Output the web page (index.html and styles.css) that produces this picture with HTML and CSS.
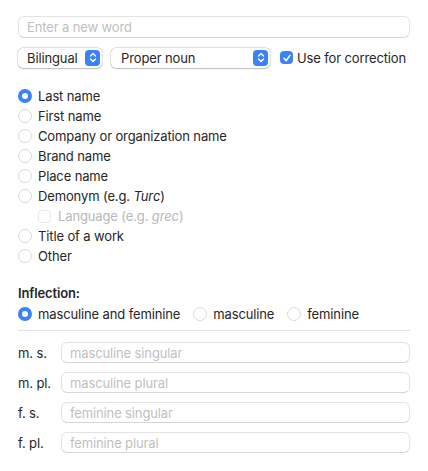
FILE: index.html
```html
<!DOCTYPE html>
<html>
<head>
<meta charset="utf-8">
<link rel="stylesheet" href="styles.css">
</head>
<body>
<div class="panel">
  <div class="field word"><span class="ph">Enter a new word</span></div>

  <div class="toolbar">
    <div class="popup pop-lang"><span>Bilingual</span>
      <span class="arrows"><svg width="8" height="11" viewBox="0 0 8 11"><path d="M1.5 4 L4 1.5 L6.5 4 M1.5 7 L4 9.5 L6.5 7" fill="none" stroke="#fff" stroke-width="1.4" stroke-linecap="round" stroke-linejoin="round"/></svg></span>
    </div>
    <div class="popup pop-type"><span>Proper noun</span>
      <span class="arrows"><svg width="8" height="11" viewBox="0 0 8 11"><path d="M1.5 4 L4 1.5 L6.5 4 M1.5 7 L4 9.5 L6.5 7" fill="none" stroke="#fff" stroke-width="1.4" stroke-linecap="round" stroke-linejoin="round"/></svg></span>
    </div>
    <label class="check">
      <span class="box on"><svg width="10" height="10" viewBox="0 0 10 10"><path d="M2 5.3 L4.2 7.6 L8 2.4" fill="none" stroke="#fff" stroke-width="1.6" stroke-linecap="round" stroke-linejoin="round"/></svg></span>
      <span>Use for correction</span>
    </label>
  </div>

  <div class="radios">
    <div class="opt"><span class="radio on"></span><span>Last name</span></div>
    <div class="opt"><span class="radio"></span><span>First name</span></div>
    <div class="opt"><span class="radio"></span><span>Company or organization name</span></div>
    <div class="opt"><span class="radio"></span><span>Brand name</span></div>
    <div class="opt"><span class="radio"></span><span>Place name</span></div>
    <div class="opt"><span class="radio"></span><span>Demonym (e.g. <i>Turc</i>)</span></div>
    <div class="opt sub disabled"><span class="box"></span><span>Language (e.g. <i>grec</i>)</span></div>
    <div class="opt"><span class="radio"></span><span>Title of a work</span></div>
    <div class="opt"><span class="radio"></span><span>Other</span></div>
  </div>

  <div class="inflection">
    <div class="title">Inflection:</div>
    <div class="inline-radios">
      <div class="opt"><span class="radio on"></span><span>masculine and feminine</span></div>
      <div class="opt"><span class="radio"></span><span>masculine</span></div>
      <div class="opt"><span class="radio"></span><span>feminine</span></div>
    </div>
  </div>

  <div class="forms">
    <div class="form-row"><span class="lbl">m. s.</span><div class="field"><span class="ph">masculine singular</span></div></div>
    <div class="form-row"><span class="lbl">m. pl.</span><div class="field"><span class="ph">masculine plural</span></div></div>
    <div class="form-row"><span class="lbl">f. s.</span><div class="field"><span class="ph">feminine singular</span></div></div>
    <div class="form-row"><span class="lbl">f. pl.</span><div class="field"><span class="ph">feminine plural</span></div></div>
  </div>
</div>
</body>
</html>
```

FILE: styles.css
```css
html, body {
  margin: 0;
  padding: 0;
  background: #ffffff;
}
body {
  font-family: Inter, "Noto Sans", "Liberation Sans", sans-serif;
  font-size: 13px;
  letter-spacing: -0.13px;
  color: #262626;
}
.panel {
  padding: 16px 18px 0 18px;
  display: flex;
  flex-direction: column;
}
.field {
  height: 21px;
  box-sizing: border-box;
  border: 1px solid #e3e3e3;
  border-bottom-color: #d6d6d6;
  border-radius: 6px;
  display: flex;
  align-items: center;
  padding-left: 8px;
  background: #fff;
}
.ph {
  color: #bfbfbf;
}
.word {
  height: 22px;
}
.toolbar {
  margin-top: 9px;
  display: flex;
  align-items: center;
  height: 21px;
}
.popup {
  height: 20px;
  box-sizing: border-box;
  border-radius: 5px;
  background: #fff;
  box-shadow: 0 0 0 0.5px rgba(0,0,0,0.18), 0 0.5px 1.5px rgba(0,0,0,0.18);
  display: flex;
  align-items: center;
  justify-content: space-between;
  padding: 0 2px 0 9px;
}
.pop-lang { width: 84px; }
.pop-type { width: 159px; margin-left: 9px; padding-left: 10px; }
.arrows {
  width: 15px;
  height: 16px;
  border-radius: 4px;
  background: #3a82f7;
  display: flex;
  align-items: center;
  justify-content: center;
}
.check {
  margin-left: 10px;
  display: flex;
  align-items: center;
  gap: 4px;
}
.box {
  width: 13px;
  height: 13px;
  box-sizing: border-box;
  border-radius: 3.5px;
  border: 1px solid #dcdcdc;
  background: #fff;
  display: inline-flex;
  align-items: center;
  justify-content: center;
}
.box.on {
  background: #3a82f7;
  border-color: #3a82f7;
}
.radios {
  margin-top: 18px;
  display: flex;
  flex-direction: column;
}
.opt {
  height: 20px;
  display: flex;
  align-items: center;
  gap: 6px;
}
.radio {
  width: 14px;
  height: 14px;
  box-sizing: border-box;
  border-radius: 50%;
  border: 1px solid #d9d9d9;
  background: #fff;
  flex: none;
}
.radio.on {
  border: 4.5px solid #3a82f7;
  background: #fff;
}
.opt.sub {
  padding-left: 20px;
  gap: 7px;
}
.opt.disabled {
  color: #b8b8b8;
}
.opt.disabled .box {
  border-color: #e6e6e6;
}
.inflection {
  margin-top: 17px;
}
.title {
  font-weight: 600;
  height: 20px;
  line-height: 20px;
}
.inline-radios {
  display: flex;
  gap: 13px;
  margin-top: 1px;
  padding-bottom: 6px;
  border-bottom: 1px solid #e3e3e3;
}
.forms {
  margin-top: 11px;
  display: flex;
  flex-direction: column;
  gap: 9px;
}
.form-row {
  display: flex;
  align-items: center;
  height: 21px;
}
.lbl {
  width: 43px;
  flex: none;
}
.form-row .field {
  flex: 1;
  height: 21px;
}
```
